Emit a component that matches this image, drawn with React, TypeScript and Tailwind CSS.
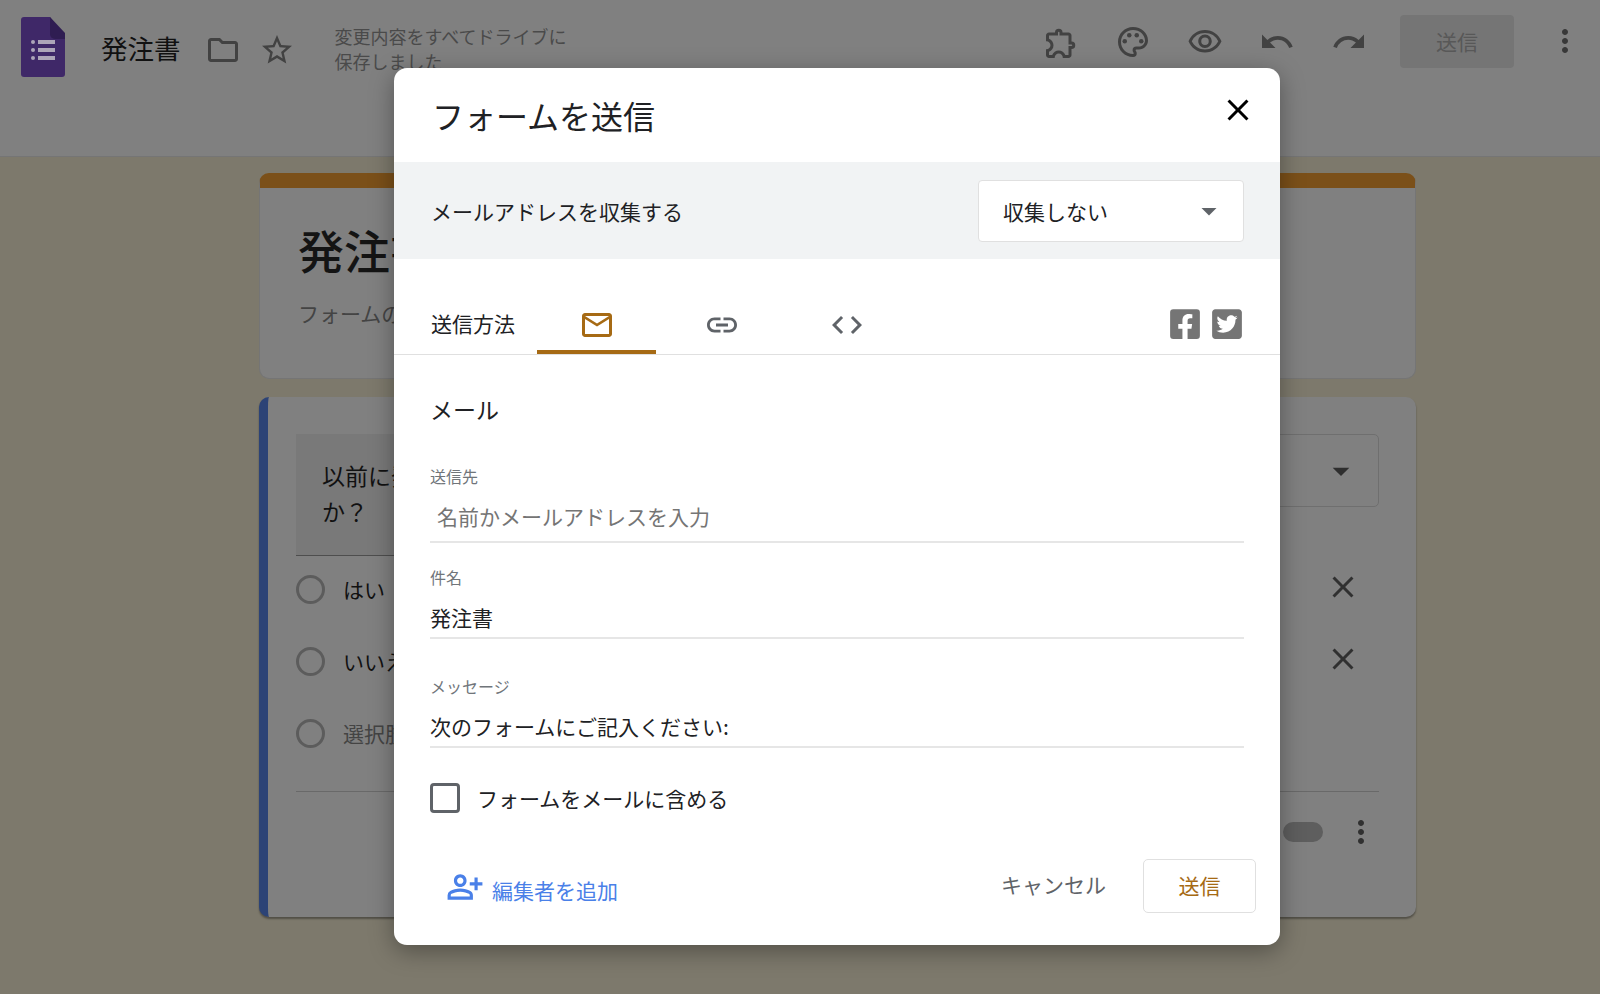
import React from "react";
import {
  MdOutlineFolder,
  MdStarBorder,
  MdOutlineExtension,
  MdOutlinePalette,
  MdOutlineVisibility,
  MdUndo,
  MdRedo,
  MdMoreVert,
  MdClose,
  MdMailOutline,
  MdLink,
  MdCode,
  MdArrowDropDown,
  MdOutlinePersonAddAlt,
} from "react-icons/md";
import { FaFacebookSquare, FaTwitterSquare } from "react-icons/fa";

const jp = "font-['Noto_Sans_CJK_JP','Noto_Sans',sans-serif]";

function FormsLogo() {
  return (
    <svg width="44" height="60" viewBox="0 0 44 60" className="shrink-0">
      <path d="M3 0H29L44 22V57a3 3 0 0 1-3 3H3a3 3 0 0 1-3-3V3a3 3 0 0 1 3-3Z" fill="#3f2868" />
      <path d="M29 0L44 16V22H34a5 5 0 0 1-5-5Z" fill="#2f1d52" />
      <g fill="#ada5b8">
        <circle cx="12" cy="25" r="2" />
        <circle cx="12" cy="33" r="2" />
        <circle cx="12" cy="41" r="2" />
        <rect x="17" y="23" width="17" height="4" />
        <rect x="17" y="31" width="17" height="4" />
        <rect x="17" y="39" width="17" height="4" />
      </g>
    </svg>
  );
}

function Radio({ label, muted }: { label: string; muted?: boolean }) {
  return (
    <div className="flex h-[72px] items-center">
      <span className="h-[29px] w-[29px] rounded-full border-[3px] border-[#5c5c5c]" />
      <span className={`ml-[18px] text-[21px] leading-[30px] ${muted ? "text-[#444444]" : "text-[#111111]"}`}>{label}</span>
    </div>
  );
}

function Field({ label, value, placeholder, gap }: { label: string; value?: string; placeholder?: string; gap: string }) {
  return (
    <div className={`border-b-2 border-[#e6e6e6] ${gap}`}>
      <div className="text-[16px] leading-[22px] text-[#70757a]">{label}</div>
      {placeholder ? (
        <div className="mt-[14px] pb-[10px] pl-[7px] text-[21px] leading-[30px] text-[#757575]">{placeholder}</div>
      ) : (
        <div className="mt-[14px] pb-[5px] text-[21px] leading-[30px] text-[#202124]">{value}</div>
      )}
    </div>
  );
}

export default function App() {
  return (
    <div className={`relative h-[994px] w-[1600px] overflow-hidden bg-[#7d796c] ${jp}`}>
      {/* top bar */}
      <header className="flex h-[157px] items-start border-b border-[#757575] bg-[#808080] pl-[21px] text-[#424242]">
        <div className="mt-[17px]">
          <FormsLogo />
        </div>
        <h1 className="ml-[36px] mt-[28px] text-[26.5px] font-normal leading-[40px] text-[#111111]">発注書</h1>
        <MdOutlineFolder className="ml-[24px] mt-[32px]" size={36} />
        <MdStarBorder className="ml-[18px] mt-[32px]" size={36} />
        <p className="ml-[40px] mt-[24px] w-[240px] text-[18px] leading-[25px] text-[#4a4a4a]">変更内容をすべてドライブに保存しました</p>
        <div className="ml-auto mt-[15px] flex items-start pr-[17px]">
          <MdOutlineExtension className="mt-[10px]" size={36} />
          <MdOutlinePalette className="ml-[36px] mt-[9px]" size={36} />
          <MdOutlineVisibility className="ml-[36px] mt-[9px]" size={36} />
          <MdUndo className="ml-[36px] mt-[9px]" size={36} />
          <MdRedo className="ml-[36px] mt-[9px]" size={36} />
          <button className="ml-[33px] h-[53px] w-[114px] rounded-[4px] bg-[#757575] text-[21px] text-[#585858]">送信</button>
          <MdMoreVert className="ml-[33px] mt-[8px] text-[#383838]" size={36} />
        </div>
      </header>

      <main className="ml-[259px] w-[1157px] pt-[16px]">
        {/* form title card */}
        <section className="h-[206px] overflow-hidden rounded-[10px] border border-[#757575] border-t-[15px] border-t-[#7b5019] bg-[#808080] pl-[38px] pt-[33px]">
          <h2 className="text-[46px] font-medium leading-[56px] text-[#141414]">発注書</h2>
          <p className="mt-[21px] text-[21px] leading-[30px] text-[#444444]">フォームの説明</p>
        </section>

        {/* question card */}
        <section className="mt-[18px] h-[520px] rounded-[10px] border-l-[9px] border-l-[#2c4376] bg-[#808080] pl-[28px] pr-[37px] pt-[37px] shadow-[0_2px_2px_rgba(0,0,0,0.35)]">
          <div className="flex items-start justify-between">
            <div className="h-[122px] w-[700px] border-b border-[#4e4e4e] bg-[#797979] pl-[26px] pt-[23px] text-[23px] leading-[36px] text-[#111111]">
              以前に発注したことがあります
              <br />
              か？
            </div>
            <div className="flex h-[73px] w-[380px] items-center justify-end rounded-[5px] border border-[#6f6f6f] pr-[17px] text-[#2e2e2e]">
              <MdArrowDropDown size={40} />
            </div>
          </div>
          <div className="relative mt-[-3px] border-b border-[#696969] pb-[22px] pt-[0px]">
            <Radio label="はい" />
            <Radio label="いいえ" />
            <Radio label="選択肢を追加" muted />
            <MdClose className="absolute right-[18px] top-[16px] text-[#303030]" size={36} />
            <MdClose className="absolute right-[18px] top-[88px] text-[#303030]" size={36} />
          </div>
          <div className="flex items-center justify-end pr-[0px] pt-[22px]">
            <span className="mr-[20px] h-[20px] w-[40px] rounded-full bg-[#5e5e5e]" />
            <MdMoreVert className="mr-[0px] text-[#303030]" size={36} />
          </div>
        </section>
      </main>

      {/* send dialog */}
      <div className="absolute left-[394px] top-[68px] flex h-[877px] w-[886px] flex-col rounded-[13px] bg-white shadow-[0_6px_24px_rgba(0,0,0,0.35)]">
        <div className="flex h-[94px] items-center justify-between pl-[38px] pr-[24px]">
          <h2 className="text-[32px] font-normal leading-[46px] text-[#202124]">フォームを送信</h2>
          <MdClose className="mb-[10px] text-black" size={36} />
        </div>

        <div className="flex h-[97px] items-center justify-between bg-[#f1f3f4] pl-[37px] pr-[36px]">
          <span className="text-[21px] leading-[30px] text-[#202124]">メールアドレスを収集する</span>
          <div className="flex h-[62px] w-[266px] items-center justify-between rounded-[4px] border border-[#e0e0e0] bg-white pl-[24px] pr-[16px]">
            <span className="text-[21px] leading-[30px] text-[#202124]">収集しない</span>
            <MdArrowDropDown className="text-[#5f6368]" size={36} />
          </div>
        </div>

        {/* tabs */}
        <div className="flex h-[96px] items-end border-b border-[#e0e0e0] pl-[37px] pr-[36px]">
          <span className="mb-[16px] w-[106px] text-[21px] leading-[30px] text-[#202124]">送信方法</span>
          <div className="flex h-[44px] w-[119px] items-start justify-center rounded-t-[3px] border-b-4 border-[#a66a14] text-[#a66a14]">
            <MdMailOutline className="-mt-[3px]" size={36} />
          </div>
          <div className="ml-[6px] flex h-[44px] w-[119px] items-start justify-center text-[#5f6368]">
            <MdLink className="-mt-[3px]" size={36} />
          </div>
          <div className="ml-[6px] flex h-[44px] w-[119px] items-start justify-center text-[#5f6368]">
            <MdCode className="-mt-[3px]" size={36} />
          </div>
          <div className="mb-[13px] ml-auto flex items-center gap-[8px] text-[#757575]">
            <FaFacebookSquare size={34} />
            <FaTwitterSquare size={34} />
          </div>
        </div>

        {/* email form */}
        <div className="flex-1 pl-[36px] pr-[36px] pt-[36px]">
          <h3 className="text-[23px] font-normal leading-[36px] text-[#202124]">メール</h3>
          <div className="mt-[38px]">
            <Field label="送信先" placeholder="名前かメールアドレスを入力" gap="" />
            <Field label="件名" value="発注書" gap="mt-[23px]" />
            <Field label="メッセージ" value="次のフォームにご記入ください:" gap="mt-[36px]" />
          </div>
          <label className="mt-[35px] flex items-center">
            <span className="h-[30px] w-[30px] rounded-[4px] border-[3px] border-[#5f6368]" />
            <span className="ml-[17px] text-[21px] leading-[30px] text-[#202124]">フォームをメールに含める</span>
          </label>
          <div className="mt-[46px] flex items-start pl-[16px] pr-[0px]">
            <MdOutlinePersonAddAlt className="mt-[9px] text-[#4a80e8]" size={38} />
            <span className="ml-[8px] mt-[16px] text-[21px] leading-[30px] text-[#4a80e8]">編集者を追加</span>
            <span className="ml-auto mr-[37px] mt-[10px] text-[21px] leading-[30px] text-[#5f6368]">キャンセル</span>
            <button className="-mr-[12px] h-[54px] w-[113px] rounded-[5px] border border-[#e0e0e0] text-[21px] text-[#a66a14]">送信</button>
          </div>
        </div>
      </div>
    </div>
  );
}
